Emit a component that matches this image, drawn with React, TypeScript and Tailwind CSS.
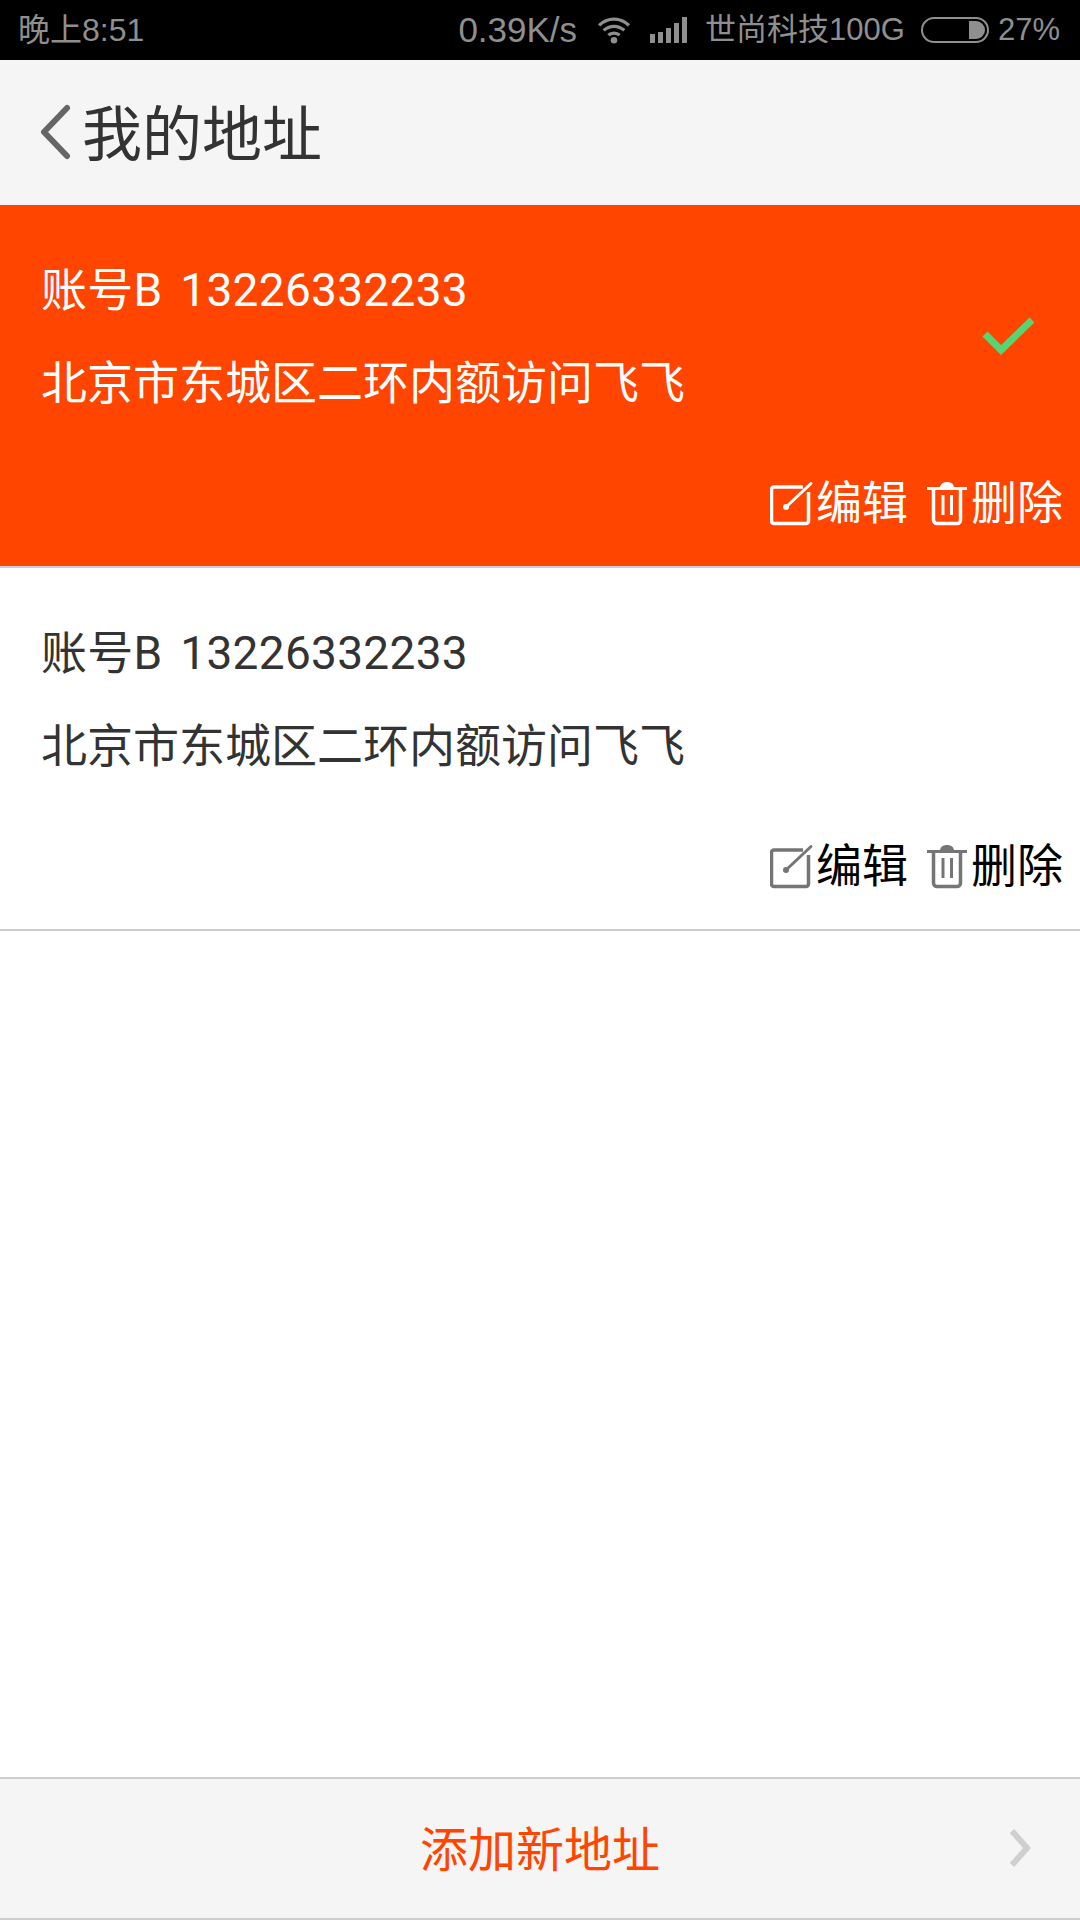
import React from 'react';

const cjk = { fontFamily: 'Roboto, "Noto Sans CJK SC", sans-serif' };

// Icône crayon + carré
function EditIcon({ color }: { color: string }) {
    return (
        <svg width="44" height="46" viewBox="0 0 44 46" fill="none" className="shrink-0">
            <path d="M33 7H4a2.500 2.500 0 0 0-2.500 2.500V41A2.500 2.500 0 0 0 4 43.500h32a2.500 2.500 0 0 0 2.500-2.500V12" stroke={color} strokeWidth="3.500" />
            <path d="M16 27 L41 3.500" stroke={color} strokeWidth="3" strokeLinecap="round" />
            <circle cx="16" cy="27" r="3" fill={color} />
        </svg>
    );
}

function TrashIcon({ color }: { color: string }) {
    return (
        <svg width="40" height="46" viewBox="0 0 40 46" fill="none" className="shrink-0">
            <path d="M0 8.500H40" stroke={color} strokeWidth="3" />
            <path d="M13 8c0-4 3-6 7-6s7 2 7 6z" fill={color} />
            <path d="M6.500 9v31a3.500 3.500 0 0 0 3.500 3.500h20a3.500 3.500 0 0 0 3.500-3.500V9" stroke={color} strokeWidth="3.500" />
            <path d="M16 15v20M24.500 15v20" stroke={color} strokeWidth="3" />
        </svg>
    );
}

function AddressCard({ selected }: { selected: boolean }) {
    const iconColor = selected ? '#ffffff' : '#757575';
    return (
        <div className={`relative h-[363px] border-b-2 border-[#cdcdcd] pl-[41px] pr-[17px] ${selected ? 'bg-[#ff4500] text-white' : 'bg-white text-[#333333]'}`}>
            <div className="pt-[56px] text-[46px] leading-[58px] tracking-[0.3px] [word-spacing:6px]">账号B 13226332233</div>
            <div className="mt-[35px] text-[46px] leading-[58px]">北京市东城区二环内额访问飞飞</div>
            <div className={`mt-[64px] flex items-center justify-end text-[46px] leading-[54px] ${selected ? 'text-white' : 'text-black'}`}>
                <EditIcon color={iconColor} />
                <span className="ml-[2px]">编辑</span>
                <span className="ml-[19px]"><TrashIcon color={iconColor} /></span>
                <span className="ml-[4px]">删除</span>
            </div>
            {selected && (
                <svg width="54" height="42" viewBox="0 0 54 42" className="absolute right-[44px] top-[111px]" fill="none">
                    <path d="M3 18 L19 34 L50 4" stroke="#55d672" strokeWidth="7" />
                </svg>
            )}
        </div>
    );
}

export default function App() {
    return (
        <div className="flex h-[1920px] w-[1080px] flex-col bg-white" style={cjk}>
            {/* Barre d'état */}
            <div className="flex h-[60px] shrink-0 items-center bg-black pl-[18px] pr-[20px] text-[31px] text-[#8f8f8f]" style={{ fontFamily: '"Liberation Sans", "Noto Sans CJK SC", sans-serif' }}>
                <span className="text-[32px]">晚上8:51</span>
                <div className="ml-auto flex items-center">
                    <span className="text-[35px]">0.39K/s</span>
                    <svg width="36" height="28" viewBox="0 0 36 30" fill="none" className="ml-[19px]">
                        <path d="M2 10c9-9 23-9 32 0M7 15.500c6-6 16-6 22 0M12 20.500c3-3 9-3 12 0" stroke="#8f8f8f" strokeWidth="3.500" />
                        <circle cx="18" cy="26" r="3.500" fill="#8f8f8f" />
                    </svg>
                    <div className="ml-[18px] flex h-[26px] items-end gap-[3px]">
                        <span className="h-[9px] w-[5px] bg-[#8f8f8f]" />
                        <span className="h-[11px] w-[5px] bg-[#8f8f8f]" />
                        <span className="h-[15px] w-[5px] bg-[#8f8f8f]" />
                        <span className="h-[20px] w-[5px] bg-[#8f8f8f]" />
                        <span className="h-[26px] w-[5px] bg-[#8f8f8f]" />
                    </div>
                    <span className="ml-[18px]">世尚科技100G</span>
                    <div className="ml-[16px] flex h-[26px] w-[68px] justify-end rounded-[13px] border-2 border-[#8f8f8f] p-[2px]">
                        <span className="h-full w-[16px] rounded-r-[10px] bg-[#8f8f8f]" />
                    </div>
                    <span className="ml-[9px]">27%</span>
                </div>
            </div>

            {/* En-tête */}
            <div className="flex h-[145px] shrink-0 items-center border-b border-[#f0f0f0] bg-[#f5f5f5] pl-[40px] text-[60px] text-[#333333]">
                <svg width="32" height="56" viewBox="0 0 32 56" fill="none">
                    <path d="M27 4 L4 28 L27 52" stroke="#666666" strokeWidth="6" strokeLinecap="round" strokeLinejoin="round" />
                </svg>
                <span className="relative top-[4px] ml-[10px]">我的地址</span>
            </div>

            <AddressCard selected />
            <AddressCard selected={false} />

            <div className="flex-1" />

            {/* Bouton d'ajout */}
            <div className="relative flex h-[143px] shrink-0 items-center justify-center border-y-2 border-[#cdcdcd] bg-[#f5f5f5] pt-[5px] text-[48px] text-[#ff4500]">
                <span>添加新地址</span>
                <svg width="24" height="40" viewBox="0 0 24 40" fill="none" className="absolute right-[48px] top-[49px]">
                    <path d="M4 3 L19 20 L4 37" stroke="#cfcfcf" strokeWidth="6" />
                </svg>
            </div>
        </div>
    );
}
